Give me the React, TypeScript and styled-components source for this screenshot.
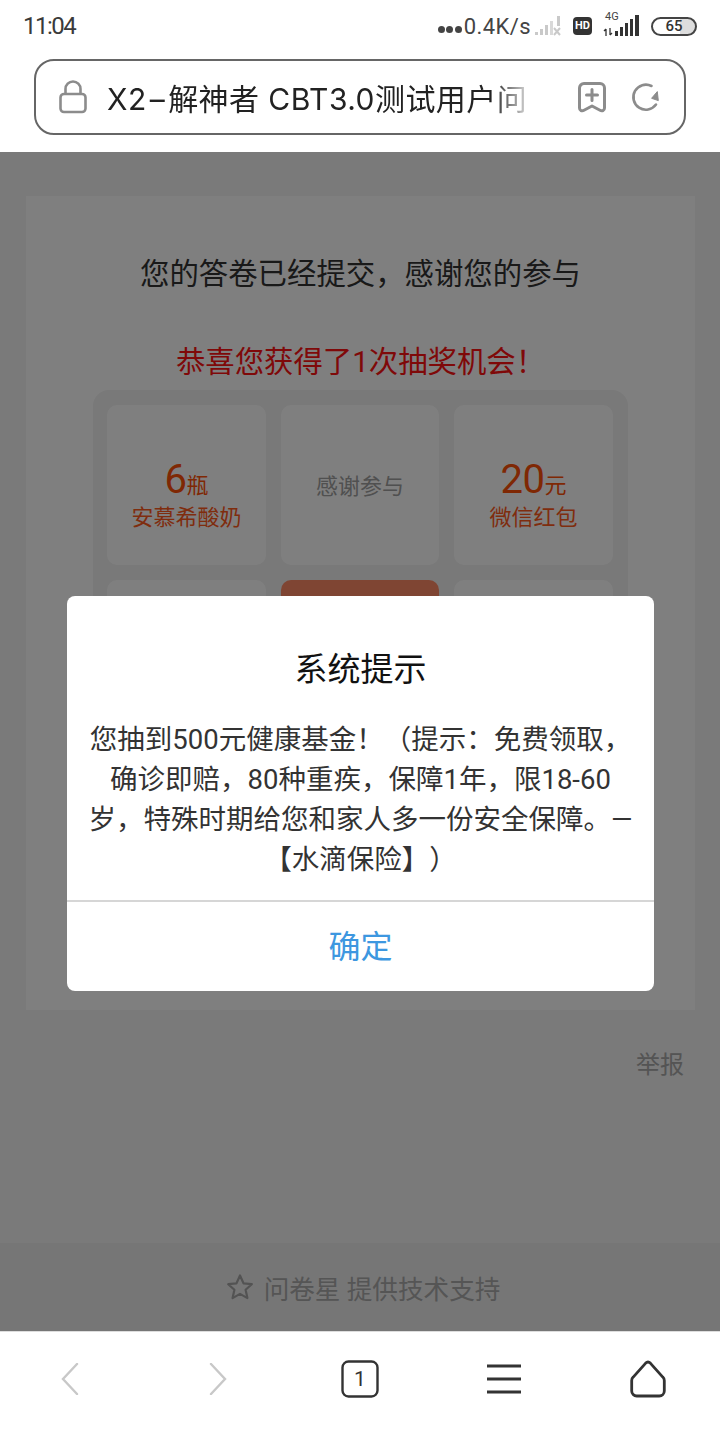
import React from 'react';
import styled, { createGlobalStyle } from 'styled-components';

const GlobalStyle = createGlobalStyle`
  html, body {
    margin: 0;
    padding: 0;
    background: #fff;
  }
  * {
    box-sizing: border-box;
  }
  body {
    font-family: "Roboto", "Noto Sans CJK SC", sans-serif;
  }
`;

const Screen = styled.div`
  width: 720px;
  height: 1440px;
  display: flex;
  flex-direction: column;
  overflow: hidden;
  background: #fff;
`;

const StatusBar = styled.div`
  height: 52px;
  flex: none;
  display: flex;
  align-items: center;
  justify-content: space-between;
  padding: 0 23px 0 23px;
  color: #333;
`;

const Clock = styled.div`
  font-size: 24px;
  line-height: 52px;
  letter-spacing: -1.5px;
  color: #3a3a3a;
`;

const StatusIcons = styled.div`
  display: flex;
  align-items: center;
`;

const Dots = styled.div`
  display: flex;
  gap: 1.5px;
  margin-top: 6px;
  margin-right: 2px;

  span {
    width: 7px;
    height: 7px;
    border-radius: 50%;
    background: #444;
  }
`;

const Speed = styled.div`
  font-size: 22px;
  letter-spacing: 0.4px;
  color: #444;
  margin-right: 3px;
`;

const HdBadge = styled.div`
  width: 19px;
  height: 18px;
  border-radius: 4px;
  background: #333;
  color: #fff;
  font-size: 11px;
  font-weight: 700;
  line-height: 18px;
  text-align: center;
  margin: 0 11px 0 11px;
`;

const NetworkSlot = styled.div`
  position: relative;
  width: 38px;
  height: 24px;
  margin-right: 10px;
`;

const NetworkLabel = styled.span`
  position: absolute;
  left: 2px;
  top: -3px;
  font-size: 11px;
  line-height: 11px;
  color: #444;
`;

const Battery = styled.div`
  width: 46px;
  height: 19px;
  border: 2px solid #444;
  border-radius: 10px;
  font-size: 15px;
  font-weight: 500;
  line-height: 15px;
  text-align: center;
  color: #333;
  background: linear-gradient(90deg, #fff 0 65%, #ddd 65% 100%);
`;

const UrlBarWrap = styled.div`
  height: 100px;
  flex: none;
  padding: 7px 34px 17px 34px;
`;

const UrlBar = styled.div`
  height: 76px;
  border: 2px solid #666;
  border-radius: 20px;
  display: flex;
  align-items: center;
  padding: 0 23px 0 23px;
`;

const UrlTitle = styled.div`
  width: 422px;
  margin-left: 20px;
  font-family: "Inter", "Noto Sans CJK SC", sans-serif;
  font-size: 30px;
  letter-spacing: 0.45px;
  color: #222;
  white-space: nowrap;
  -webkit-mask-image: linear-gradient(90deg, #000 0 91%, rgba(0, 0, 0, 0.15) 100%);
  mask-image: linear-gradient(90deg, #000 0 91%, rgba(0, 0, 0, 0.15) 100%);
`;

const TitleDash = styled.span`
  margin: 0 3px;
`;

const UrlActions = styled.div`
  display: flex;
  align-items: center;
  gap: 25px;
  margin-left: auto;
`;

const Page = styled.div`
  position: relative;
  flex: 1;
  min-height: 0;
  display: flex;
  flex-direction: column;
  background: #f4f4f4;
  overflow: hidden;
`;

const SurveyCard = styled.div`
  flex: none;
  height: 814px;
  margin: 44px 25px 0 26px;
  background: #fff;
  display: flex;
  flex-direction: column;
  align-items: center;
`;

const Thanks = styled.div`
  margin-top: 57px;
  font-size: 29.4px;
  line-height: 42px;
  color: #333;
`;

const Congrats = styled.div`
  margin-top: 46px;
  font-size: 29.4px;
  line-height: 42px;
  color: #ff1212;
`;

const PrizeGrid = styled.div`
  width: 535px;
  margin-top: 7px;
  padding: 15px 15px 15px 14px;
  border-radius: 16px;
  background: #f2f2f2;
  display: grid;
  grid-template-columns: 159px 158px 159px;
  grid-auto-rows: 160px;
  gap: 15px;
`;

const PrizeCell = styled.div<{ $active?: boolean }>`
  border-radius: 10px;
  background: ${p => (p.$active ? '#ff8a66' : '#fff')};
  display: flex;
  flex-direction: column;
  align-items: center;
  justify-content: center;
`;

const PrizeAmount = styled.div`
  font-size: 40px;
  line-height: 44px;
  letter-spacing: -0.5px;
  color: #ff5008;
  margin-top: 22px;

  small {
    font-size: 22px;
    letter-spacing: 0;
  }
`;

const PrizeName = styled.div`
  font-size: 22px;
  line-height: 34px;
  margin-top: -7px;
  color: #ff5a1c;
`;

const NoPrize = styled.div`
  font-size: 22px;
  margin-top: -2px;
  color: #a0a0a0;
`;

const ReportRow = styled.div`
  flex: none;
  display: flex;
  justify-content: flex-end;
  padding: 38px 36px 0 0;
  font-size: 24px;
  line-height: 34px;
  color: #a8a8a8;
`;

const SupportBar = styled.div`
  margin-top: auto;
  height: 88px;
  flex: none;
  background: #ededed;
  display: flex;
  align-items: center;
  justify-content: center;
  gap: 10px;
  padding-left: 6px;
  font-size: 25.6px;
  color: #aaa;
`;

const Overlay = styled.div`
  position: absolute;
  inset: 0;
  background: rgba(0, 0, 0, 0.5);
  display: flex;
  justify-content: center;
  align-items: flex-start;
  padding: 444px 0 0 1px;
`;

const Dialog = styled.div`
  width: 587px;
  height: 395px;
  border-radius: 8px;
  background: #fff;
  display: flex;
  flex-direction: column;
`;

const DialogTitle = styled.div`
  margin-top: 52px;
  text-align: center;
  font-size: 33px;
  line-height: 44px;
  color: #111;
`;

const DialogBody = styled.div`
  margin-top: 28px;
  text-align: center;
  font-size: 27.5px;
  line-height: 40px;
  white-space: nowrap;
  text-spacing-trim: space-all;
  color: #333;
`;

const DialogButton = styled.div`
  margin-top: auto;
  height: 91px;
  border-top: 2px solid #d6d6d6;
  padding-bottom: 5px;
  display: flex;
  align-items: center;
  justify-content: center;
  font-size: 32px;
  color: #3d97e0;
`;

const BottomNav = styled.div`
  height: 109px;
  flex: none;
  background: #fff;
  border-top: 1px solid #ddd;
  display: flex;
  align-items: center;
  justify-content: space-around;
  padding: 0 0 14px 0;
`;

const NavSlot = styled.div`
  position: relative;
  width: 144px;
  display: flex;
  align-items: center;
  justify-content: center;
`;

const TabCount = styled.span`
  position: absolute;
  left: 0;
  right: 0;
  text-align: center;
  font-size: 21px;
  color: #333;
`;

const prizes = [
  { amount: '6', unit: '瓶', name: '安慕希酸奶' },
  { empty: true },
  { amount: '20', unit: '元', name: '微信红包' },
  {},
  { active: true },
  {},
  {},
  {},
  {},
];

function SignalOff() {
  return (
    <svg width="28" height="22" viewBox="0 0 28 22" fill="#c9c9c9">
      <rect x="1" y="17" width="3" height="3" />
      <rect x="6" y="14" width="3" height="6" />
      <rect x="11" y="10" width="3" height="10" />
      <rect x="16" y="6" width="3" height="14" opacity=".7" />
      <rect x="23" y="1" width="3" height="10" />
      <path d="M20 13l6 7M26 13l-6 7" stroke="#c9c9c9" strokeWidth="2" fill="none" />
    </svg>
  );
}

function SignalFull() {
  return (
    <svg width="38" height="24" viewBox="0 0 38 24" fill="#333" style={{ display: 'block' }}>
      <path d="M3 22v-7M1 17l2-2M7 14v7M7 21l2-2" stroke="#333" strokeWidth="1.3" fill="none" />
      <rect x="12" y="17" width="3" height="5" />
      <rect x="17" y="13" width="3" height="9" />
      <rect x="22" y="9" width="3" height="13" />
      <rect x="27" y="5" width="3" height="17" />
      <rect x="32" y="1" width="4" height="21" />
    </svg>
  );
}

function LockIcon() {
  return (
    <svg width="28" height="34" viewBox="0 0 28 34" fill="none" stroke="#8c8c8c" strokeWidth="2.6">
      <rect x="1.5" y="14" width="25" height="18" rx="3.5" />
      <path d="M6.5 14V9a7.5 7.5 0 0 1 15 0v5" />
    </svg>
  );
}

function BookmarkPlusIcon() {
  return (
    <svg width="28" height="31" viewBox="0 0 28 31" fill="none" stroke="#8c8c8c" strokeWidth="3" strokeLinejoin="round">
      <path d="M6 1.500h16a4.500 4.500 0 0 1 4.500 4.500v20c0 2.500-2.500 3.500-4.500 2.300L14 24l-8 4.300c-2 1.200-4.500.2-4.500-2.300V6A4.500 4.500 0 0 1 6 1.500z" />
      <path d="M14 7.500v11M8.500 13h11" strokeLinecap="round" />
    </svg>
  );
}

function ReloadIcon() {
  return (
    <svg width="30" height="30" viewBox="0 0 30 30" fill="none" stroke="#8c8c8c" strokeWidth="2.6">
      <path d="M25 22.500A12.500 12.500 0 1 1 20.500 4" strokeLinecap="round" />
      <path d="M26.300 9.600l1 9-6.700-2.300z" fill="#8c8c8c" stroke="#8c8c8c" strokeWidth="1" strokeLinejoin="round" />
    </svg>
  );
}

function StarIcon() {
  return (
    <svg width="28" height="28" viewBox="0 0 28 28" fill="none" stroke="#a6a6a6" strokeWidth="2.2" strokeLinejoin="round">
      <path d="M14 2.500l3.500 7.800 8.300.9-6.200 5.600 1.800 8.300L14 20.900l-7.400 4.200 1.800-8.300-6.200-5.600 8.300-.9z" />
    </svg>
  );
}

function ChevronIcon({ right }: { right?: boolean }) {
  return (
    <svg width="22" height="32" viewBox="0 0 22 32" fill="none" stroke="#c8c8c8" strokeWidth="2.4" strokeLinecap="round">
      <path d={right ? 'M6 1l14 15L6 31' : 'M16 1L2 16l14 15'} />
    </svg>
  );
}

function TabIcon() {
  return (
    <svg width="38" height="38" viewBox="0 0 38 38" fill="none" stroke="#333" strokeWidth="2.4">
      <rect x="1.500" y="1.500" width="35" height="35" rx="6" />
    </svg>
  );
}

function MenuIcon() {
  return (
    <svg width="36" height="30" viewBox="0 0 36 30" fill="none" stroke="#333" strokeWidth="3">
      <path d="M1 2h34M1 15h34M1 28h34" />
    </svg>
  );
}

function HomeIcon() {
  return (
    <svg width="38" height="38" viewBox="0 0 38 38" fill="none" stroke="#333" strokeWidth="2.800" strokeLinejoin="round">
      <path d="M19 2c1 0 1.700.5 2.300 1.100l12.500 14c1 1 1.500 2 1.500 3.300V31a5 5 0 0 1-5 5H7.700a5 5 0 0 1-5-5V20.400c0-1.300.5-2.300 1.500-3.300L16.700 3.100C17.300 2.500 18 2 19 2z" />
    </svg>
  );
}

export default function App() {
  return (
    <Screen>
      <GlobalStyle />
      <StatusBar>
        <Clock>11:04</Clock>
        <StatusIcons>
          <Dots><span /><span /><span /></Dots>
          <Speed>0.4K/s</Speed>
          <SignalOff />
          <HdBadge>HD</HdBadge>
          <NetworkSlot>
            <NetworkLabel>4G</NetworkLabel>
            <SignalFull />
          </NetworkSlot>
          <Battery>65</Battery>
        </StatusIcons>
      </StatusBar>

      <UrlBarWrap>
        <UrlBar>
          <LockIcon />
          <UrlTitle>X2<TitleDash>–</TitleDash>解神者 CBT3.0测试用户问</UrlTitle>
          <UrlActions>
            <BookmarkPlusIcon />
            <ReloadIcon />
          </UrlActions>
        </UrlBar>
      </UrlBarWrap>

      <Page>
        <SurveyCard>
          <Thanks>您的答卷已经提交，感谢您的参与</Thanks>
          <Congrats>恭喜您获得了1次抽奖机会！</Congrats>
          <PrizeGrid>
            {prizes.map((prize, i) => (
              <PrizeCell key={i} $active={prize.active}>
                {prize.amount && (
                  <>
                    <PrizeAmount>{prize.amount}<small>{prize.unit}</small></PrizeAmount>
                    <PrizeName>{prize.name}</PrizeName>
                  </>
                )}
                {prize.empty && <NoPrize>感谢参与</NoPrize>}
              </PrizeCell>
            ))}
          </PrizeGrid>
        </SurveyCard>
        <ReportRow>举报</ReportRow>
        <SupportBar>
          <StarIcon />
          问卷星 提供技术支持
        </SupportBar>

        <Overlay>
          <Dialog>
            <DialogTitle>系统提示</DialogTitle>
            <DialogBody>
              您抽到500元健康基金！（提示：免费领取，<br />
              确诊即赔，80种重疾，保障1年，限18-60<br />
              岁，特殊时期给您和家人多一份安全保障。—<br />
              【水滴保险】）
            </DialogBody>
            <DialogButton>确定</DialogButton>
          </Dialog>
        </Overlay>
      </Page>

      <BottomNav>
        <NavSlot><ChevronIcon /></NavSlot>
        <NavSlot><ChevronIcon right /></NavSlot>
        <NavSlot>
          <TabIcon />
          <TabCount>1</TabCount>
        </NavSlot>
        <NavSlot><MenuIcon /></NavSlot>
        <NavSlot><HomeIcon /></NavSlot>
      </BottomNav>
    </Screen>
  );
}
